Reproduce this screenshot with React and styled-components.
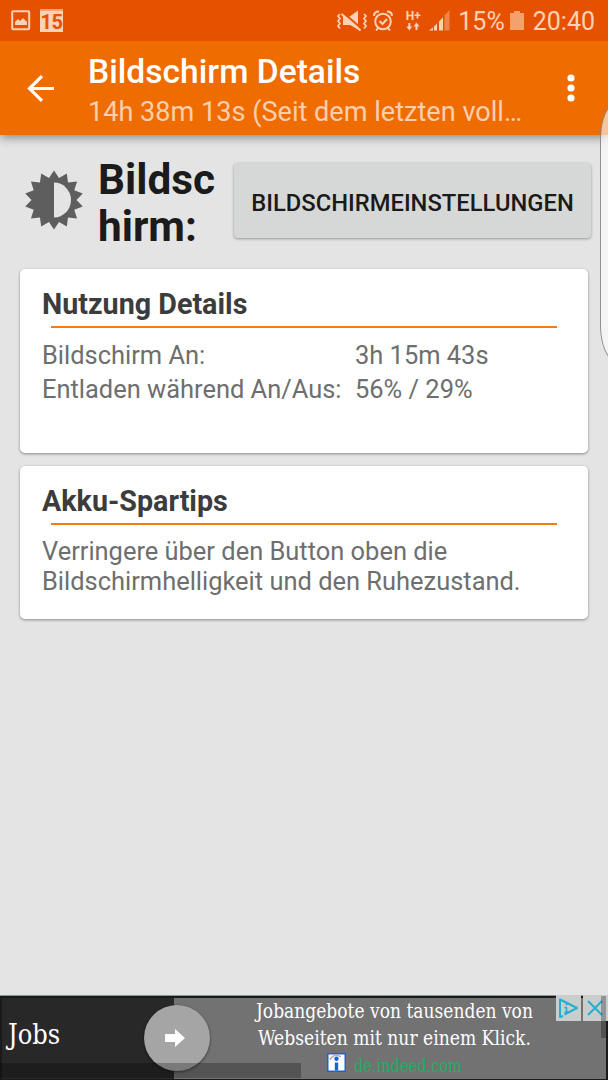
import React from "react";
import styled, { createGlobalStyle } from "styled-components";

const GlobalStyle = createGlobalStyle`
    * {
        box-sizing: border-box;
    }

    body {
        margin: 0;
        background-color: #e4e4e4;
        font-family: Roboto, "Noto Sans", sans-serif;
    }
`;

const Screen = styled.div`
    position: relative;
    display: flex;
    flex-direction: column;
    width: 608px;
    height: 1080px;
    overflow: hidden;
    background-color: #e4e4e4;
    white-space: nowrap;
`;

const StatusBar = styled.div`
    position: relative;
    z-index: 1;
    display: flex;
    align-items: center;
    height: 41px;
    padding: 0 13px 0 11px;
    background-color: #e65100;
    color: #fcd2b6;
    font-size: 25px;
`;

const Notifications = styled.div`
    display: flex;
    align-items: center;
    gap: 9px;
    margin-right: auto;
`;

const StatusText = styled.span`
    margin-left: ${(props) => props.$left}px;
    padding-top: 1px;
`;

const StatusIcon = styled.svg`
    flex: none;
    margin-left: ${(props) => props.$left || 0}px;
`;

const Calendar = styled.div`
    width: 23px;
    height: 23px;
    border-top: 2px solid #f3a578;
    background-color: #fcd2b6;
    color: #e65100;
    font-size: 20px;
    font-weight: bold;
    line-height: 22px;
    text-align: center;
    letter-spacing: -0.5px;
`;

const Network = styled.div`
    display: flex;
    flex-direction: column;
    align-items: center;
    width: 16px;
    margin-left: 12px;
    font-size: 12px;
    font-weight: bold;
    line-height: 11px;
`;

const Toolbar = styled.header`
    position: relative;
    display: flex;
    align-items: center;
    height: 94px;
    flex: none;
    padding: 0 29px 0 27px;
    background-color: #ef6c00;
    box-shadow: 0 2px 10px rgba(0, 0, 0, 0.45);
`;

const Titles = styled.div`
    margin-left: 33px;
    margin-right: auto;
    padding-top: 6px;
`;

const Title = styled.h1`
    margin: 0;
    color: #fff;
    font-size: 33.6px;
    font-weight: 500;
    line-height: 42px;
`;

const Subtitle = styled.div`
    color: #fbcfae;
    font-size: 27.1px;
    line-height: 38px;
`;

const Content = styled.main`
    display: flex;
    flex-direction: column;
    flex: 1;
    padding: 21px 16px 0 20px;
`;

const Heading = styled.div`
    display: flex;
    align-items: flex-start;
    height: 113px;
`;

const SunIcon = styled.svg`
    flex: none;
    margin: 13px 0 0 3px;
`;

const Name = styled.h2`
    width: 120px;
    margin: 0 0 0 13px;
    color: #1b1b1b;
    font-size: 42.3px;
    font-weight: bold;
    line-height: 47px;
`;

const SettingsButton = styled.button`
    width: 357px;
    height: 75px;
    margin: 7px 1px 0 auto;
    padding: 4px 0 0;
    flex: none;
    border: 0;
    border-radius: 4px;
    background-color: #d6d8d7;
    box-shadow: 0 1px 3px rgba(0, 0, 0, 0.35);
    color: #1a1a1a;
    font-family: inherit;
    font-size: 23.75px;
    font-weight: 500;
`;

const Card = styled.section`
    width: 568px;
    height: ${(props) => props.$height}px;
    margin-bottom: 13px;
    padding: 17px 30px 0 22px;
    border-radius: 5px;
    background-color: #fff;
    box-shadow: 0 1px 3px rgba(0, 0, 0, 0.4);
    color: #6e6e6e;
    font-size: 25.45px;
`;

const CardTitle = styled.h3`
    margin: 0;
    color: #3c3c3c;
    font-size: 28.7px;
    font-weight: bold;
    line-height: 36px;
`;

const Rule = styled.div`
    height: 2px;
    margin: 4px 1px 0 9px;
    background-color: #f57c14;
`;

const Usage = styled.div`
    display: grid;
    grid-template-columns: 313px auto;
    margin-top: 10px;
    line-height: 34px;
`;

const Tip = styled.p`
    margin: 11px 0 0;
    line-height: 30px;
`;

const EdgeHandle = styled.div`
    position: absolute;
    top: 103px;
    right: -24px;
    width: 32px;
    height: 258px;
    border: 1px solid rgba(90, 90, 90, 0.65);
    border-radius: 24px / 54px;
    background-color: rgba(255, 255, 255, 0.6);
`;

const Ad = styled.aside`
    position: relative;
    display: flex;
    flex: none;
    height: 85px;
    padding: 2px 2px 1px;
    border-top: 1px solid #8b9694;
    background-color: #1a1a1a;
    color: #fff;
    font-family: "DejaVu Serif Condensed", "DejaVu Serif", serif;
    font-stretch: condensed;
`;

const AdBrand = styled.div`
    width: 172px;
    padding: 16px 0 0 6px;
    background-color: #282828;
    font-size: 28px;
    line-height: 42px;
`;

const AdBody = styled.div`
    flex: 1;
    background-color: #727272;
    font-size: 19.5px;
    line-height: 27px;
`;

const Fit = styled.span`
    display: block;
    width: max-content;
    margin-left: ${(props) => props.$left || 0}px;
    transform: scaleX(${(props) => props.$scale});
    transform-origin: left;
`;

const AdLink = styled.div`
    display: flex;
    align-items: center;
    height: 26px;
    padding-left: 153px;
    color: #1fae63;
    font-size: 18px;

    svg {
        margin-bottom: 6px;
    }
`;

const AdArrow = styled.div`
    position: absolute;
    top: 9px;
    left: 144px;
    display: flex;
    align-items: center;
    justify-content: center;
    width: 66px;
    height: 66px;
    padding-right: 4px;
    border-radius: 50%;
    background-color: #a5a5a5;
    box-shadow: 0 1px 3px rgba(0, 0, 0, 0.5);
`;

const AdShade = styled.div`
    position: absolute;
    left: 0;
    bottom: 2px;
    width: 301px;
    height: 15px;
    background-color: rgba(0, 0, 0, 0.26);
`;

const AdChoices = styled.div`
    position: absolute;
    top: -1px;
    right: 0;
    display: flex;
    gap: 2px;
`;

const Choice = styled.svg`
    width: 25px;
    height: 26px;
    background-color: #c9cdcc;
    fill: none;
    stroke: #22afd3;
    stroke-width: 2;
    stroke-linejoin: round;
`;

const AdScroll = styled.div`
    position: absolute;
    top: 0;
    right: 2px;
    width: 5px;
    height: 42px;
    background-color: rgba(0, 0, 0, 0.28);
`;

// fourteen teeth around the disc, starting at the top
const teeth = Array.from({ length: 28 }, (_, i) => {
    const r = i % 2 ? 22.5 : 29.5;
    const a = (i * Math.PI) / 14;
    return `${30 + r * Math.sin(a)},${30 - r * Math.cos(a)}`;
}).join(" ");

function Status() {
    return (
        <StatusBar>
            <Notifications>
                <StatusIcon width="20" height="21" viewBox="0 0 20 21" fill="none">
                    <rect x="1.2" y="1.2" width="17" height="18" rx="1" stroke="#fcd2b6" strokeWidth="2" />
                    <path d="M4 15v-3l3-3 2 2 3-3 4 4v3z" fill="#fcd2b6" />
                </StatusIcon>
                <Calendar>15</Calendar>
            </Notifications>
            <StatusIcon width="32" height="22" viewBox="0 0 32 22" fill="none" stroke="#fcd2b6" strokeWidth="1.7">
                <path d="M4 4 2 6l2 2.500L2 11l2 2.500L2 16l2 2.500M28 4l2 2-2 2.500 2 2.500-2 2.500 2 2.500-2 2.500" />
                <path d="M7 7h6l9-6.500v19L14 15H7z" fill="#fcd2b6" stroke="none" />
                <path d="M7 2.500 26 19" stroke="#e65100" strokeWidth="2" />
                <path d="M5.500 4 24.500 20.500" strokeWidth="2.200" />
            </StatusIcon>
            <StatusIcon $left={5} width="20" height="22" viewBox="0 0 20 22" fill="none" stroke="#fcd2b6" strokeWidth="2">
                <circle cx="10" cy="11.500" r="7.800" />
                <path d="m6.500 11 3 3 4.500-5M1 6c0-3 2-4.500 5-4.500M19 6c0-3-2-4.500-5-4.500M5 18l-2 2.500M15 18l2 2.500" />
            </StatusIcon>
            <Network>
                H+
                <svg width="14" height="9" viewBox="0 0 14 9" fill="#fcd2b6">
                    <path d="M2.300 1h2v3.500h2l-3 4-3-4h2zM9.500 8h2V4.500h2l-3-4-3 4h2z" />
                </svg>
            </Network>
            <StatusIcon $left={8} width="21" height="21" viewBox="0 0 21 21" fill="#fcd2b6">
                <path d="M0 20.500 4 17.500v3zM5 16.500l3-3v7h-3zM10 11.500l4-4v13h-4z" />
                <path d="M15.500 5.500 20.500 0v20.500h-5z" opacity=".4" />
            </StatusIcon>
            <StatusText $left={8}>15%</StatusText>
            <StatusIcon $left={5} width="14" height="19" viewBox="0 0 14 19" fill="#f4a16c">
                <path d="M4 0h6v2h4v17H0V2h4z" />
            </StatusIcon>
            <StatusText $left={9}>20:40</StatusText>
        </StatusBar>
    );
}

function Banner() {
    return (
        <Ad>
            <AdBrand>
                <Fit $scale={0.96}>Jobs</Fit>
            </AdBrand>
            <AdBody>
                <Fit $left={82} $scale={0.975}>Jobangebote von tausenden von</Fit>
                <Fit $left={84} $scale={0.978}>Webseiten mit nur einem Klick.</Fit>
                <AdLink>
                    <svg width="19" height="19" viewBox="0 0 19 19">
                        <rect x=".75" y=".75" width="17.500" height="17.500" fill="#fff" stroke="#1764dc" strokeWidth="1.500" />
                        <path d="M3 7c2-5 7-6 11-3" fill="none" stroke="#b2b2b2" strokeWidth="1.500" />
                        <circle cx="9.500" cy="5.800" r="2.200" fill="#1764dc" />
                        <path d="M7.800 9.500h3.400v8h-3.400z" fill="#1764dc" />
                    </svg>
                    <Fit $left={8} $scale={0.9}>de.indeed.com</Fit>
                </AdLink>
            </AdBody>
            <AdArrow>
                <svg width="20" height="18" viewBox="0 0 20 18" fill="#fff">
                    <path d="M0 5h10V0l10 9-10 9v-5H0z" />
                </svg>
            </AdArrow>
            <AdShade />
            <AdChoices>
                <Choice viewBox="0 0 25 26">
                    <path d="M7 21 4 22V4.500L21 13 8.500 19.500" />
                    <path d="M8.500 12.500h2V17M8.500 17h4M9.500 9.500h2" strokeWidth="1.600" />
                </Choice>
                <Choice viewBox="0 0 25 26">
                    <path d="m5 6 14 14M19 6 5 20" />
                </Choice>
            </AdChoices>
            <AdScroll />
        </Ad>
    );
}

function App() {
    return (
        <Screen>
            <GlobalStyle />
            <Status />
            <Toolbar>
                <svg width="28" height="27" viewBox="0 0 28 27" fill="none" stroke="#fff" strokeWidth="3.200">
                    <path d="M27 13.500H3M15 1.200 2.500 13.500 15 25.800" />
                </svg>
                <Titles>
                    <Title>Bildschirm Details</Title>
                    <Subtitle>14h 38m 13s (Seit dem letzten voll…</Subtitle>
                </Titles>
                <svg width="16" height="28" viewBox="0 0 16 28" fill="#fff">
                    <circle cx="8" cy="4" r="3.600" />
                    <circle cx="8" cy="14" r="3.600" />
                    <circle cx="8" cy="24" r="3.600" />
                </svg>
            </Toolbar>
            <Content>
                <Heading>
                    <SunIcon width="62" height="62" viewBox="-1 -1 62 62">
                        <polygon points={teeth} fill="#5e5e5e" />
                        <path d="M30 12.500a17 17.500 0 0 1 0 35z" fill="#e4e4e4" />
                    </SunIcon>
                    <Name>
                        Bildsc<br />
                        hirm:
                    </Name>
                    <SettingsButton>BILDSCHIRMEINSTELLUNGEN</SettingsButton>
                </Heading>
                <Card $height={184}>
                    <CardTitle>Nutzung Details</CardTitle>
                    <Rule />
                    <Usage>
                        <span>Bildschirm An:</span>
                        <span>3h 15m 43s</span>
                        <span>Entladen während An/Aus:</span>
                        <span>56% / 29%</span>
                    </Usage>
                </Card>
                <Card $height={153}>
                    <CardTitle>Akku-Spartips</CardTitle>
                    <Rule />
                    <Tip>
                        Verringere über den Button oben die<br />
                        Bildschirmhelligkeit und den Ruhezustand.
                    </Tip>
                </Card>
            </Content>
            <Banner />
            <EdgeHandle />
        </Screen>
    );
}

export default App;
